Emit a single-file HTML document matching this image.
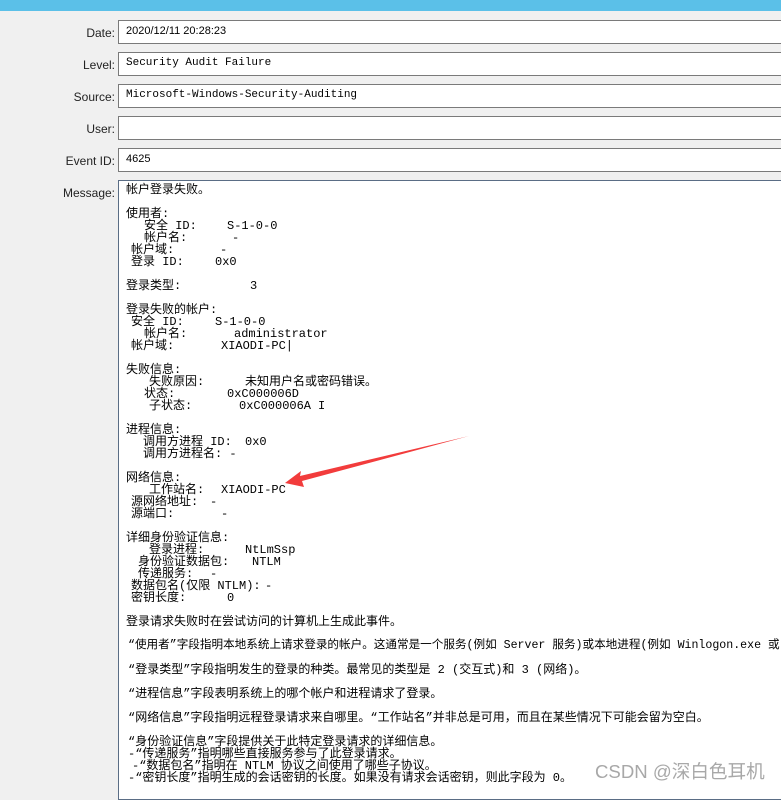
<!DOCTYPE html>
<html><head><meta charset="utf-8"><style>
*{margin:0;padding:0;box-sizing:border-box}
body{width:781px;height:789px;overflow:hidden;background:#f0f0f0;position:relative;font-family:"Liberation Mono","Noto Sans CJK SC",monospace;font-size:12px;color:#000}
.bar{position:absolute;left:0;top:0;width:781px;height:11px;background:#5bc0e8}
.lab{position:absolute;right:666px;font-family:"Liberation Sans",sans-serif;font-size:12px;color:#222;text-align:right;white-space:nowrap}
.f{position:absolute;left:118px;width:680px;height:24px;background:#fff;border:1px solid #7a7a7a}
.f span{position:absolute;left:7px;top:4px;font-size:11px;white-space:nowrap}
.msg{position:absolute;left:118px;top:180px;width:680px;height:620px;background:#fff;border:1px solid #5a6d85}
.l{position:absolute;white-space:nowrap;font-size:12px;line-height:14px;top:1px}
.wm{position:absolute;left:595px;top:757px;font-family:"Liberation Sans","Noto Sans CJK SC",sans-serif;font-size:18.6px;color:#a8a8a8}
</style></head><body>
<div class="bar"></div>
<div class="lab" style="top:26px">Date:</div>
<div class="lab" style="top:58px">Level:</div>
<div class="lab" style="top:90px">Source:</div>
<div class="lab" style="top:122px">User:</div>
<div class="lab" style="top:154px">Event ID:</div>
<div class="lab" style="top:186px">Message:</div>
<div class="f" style="top:20px"><span style="font-family:'Liberation Sans',sans-serif">2020/12/11 20:28:23</span></div>
<div class="f" style="top:52px"><span>Security Audit Failure</span></div>
<div class="f" style="top:84px"><span>Microsoft-Windows-Security-Auditing</span></div>
<div class="f" style="top:116px"></div>
<div class="f" style="top:148px"><span style="font-family:'Liberation Sans',sans-serif">4625</span></div>
<div class="msg"></div>
<div style="position:absolute;left:0;top:1px;width:781px;height:789px">
<div class="l" style="left:126px;top:182px">帐户登录失败。</div>
<div class="l" style="left:126px;top:206px">使用者:</div>
<div class="l" style="left:144px;top:218px">安全 ID:</div><div class="l" style="left:227px;top:218px">S-1-0-0</div>
<div class="l" style="left:144px;top:230px">帐户名:</div><div class="l" style="left:232px;top:230px">-</div>
<div class="l" style="left:131px;top:242px">帐户域:</div><div class="l" style="left:220px;top:242px">-</div>
<div class="l" style="left:131px;top:254px">登录 ID:</div><div class="l" style="left:215px;top:254px">0x0</div>
<div class="l" style="left:126px;top:278px">登录类型:</div><div class="l" style="left:250px;top:278px">3</div>
<div class="l" style="left:126px;top:302px">登录失败的帐户:</div>
<div class="l" style="left:131px;top:314px">安全 ID:</div><div class="l" style="left:215px;top:314px">S-1-0-0</div>
<div class="l" style="left:144px;top:326px">帐户名:</div><div class="l" style="left:234px;top:326px">administrator</div>
<div class="l" style="left:131px;top:338px">帐户域:</div><div class="l" style="left:221px;top:338px">XIAODI-PC|</div>
<div class="l" style="left:126px;top:362px">失败信息:</div>
<div class="l" style="left:149px;top:374px">失败原因:</div><div class="l" style="left:245px;top:374px">未知用户名或密码错误。</div>
<div class="l" style="left:144px;top:386px">状态:</div><div class="l" style="left:227px;top:386px">0xC000006D</div>
<div class="l" style="left:149px;top:398px">子状态:</div><div class="l" style="left:239px;top:398px">0xC000006A</div>
<div class="l" style="left:318px;top:398px">I</div>
<div class="l" style="left:126px;top:422px">进程信息:</div>
<div class="l" style="left:143px;top:434px">调用方进程 ID:</div><div class="l" style="left:245px;top:434px">0x0</div>
<div class="l" style="left:143px;top:446px">调用方进程名: -</div>
<div class="l" style="left:126px;top:470px">网络信息:</div>
<div class="l" style="left:149px;top:482px">工作站名:</div><div class="l" style="left:221px;top:482px">XIAODI-PC</div>
<div class="l" style="left:131px;top:494px">源网络地址:</div><div class="l" style="left:210px;top:494px">-</div>
<div class="l" style="left:131px;top:506px">源端口:</div><div class="l" style="left:221px;top:506px">-</div>
<div class="l" style="left:126px;top:530px">详细身份验证信息:</div>
<div class="l" style="left:149px;top:542px">登录进程:</div><div class="l" style="left:245px;top:542px">NtLmSsp</div>
<div class="l" style="left:138px;top:554px">身份验证数据包:</div><div class="l" style="left:252px;top:554px">NTLM</div>
<div class="l" style="left:138px;top:566px">传递服务:</div><div class="l" style="left:210px;top:566px">-</div>
<div class="l" style="left:131px;top:578px">数据包名(仅限 NTLM):</div><div class="l" style="left:265px;top:578px">-</div>
<div class="l" style="left:131px;top:590px">密钥长度:</div><div class="l" style="left:227px;top:590px">0</div>
<div class="l" style="left:126px;top:614px">登录请求失败时在尝试访问的计算机上生成此事件。</div>
<div class="l" style="left:128px;top:638px;font-size:11.6px">“使用者”字段指明本地系统上请求登录的帐户。这通常是一个服务(例如 Server 服务)或本地进程(例如 Winlogon.exe 或</div>
<div class="l" style="left:128px;top:662px">“登录类型”字段指明发生的登录的种类。最常见的类型是 2 (交互式)和 3 (网络)。</div>
<div class="l" style="left:128px;top:686px">“进程信息”字段表明系统上的哪个帐户和进程请求了登录。</div>
<div class="l" style="left:128px;top:710px">“网络信息”字段指明远程登录请求来自哪里。“工作站名”并非总是可用，而且在某些情况下可能会留为空白。</div>
<div class="l" style="left:128px;top:734px">“身份验证信息”字段提供关于此特定登录请求的详细信息。</div>
<div class="l" style="left:128px;top:746px">-“传递服务”指明哪些直接服务参与了此登录请求。</div>
<div class="l" style="left:132px;top:758px">-“数据包名”指明在 NTLM 协议之间使用了哪些子协议。</div>
<div class="l" style="left:128px;top:770px">-“密钥长度”指明生成的会话密钥的长度。如果没有请求会话密钥，则此字段为 0。</div>
</div>
<svg style="position:absolute;left:0;top:0" width="781" height="789"><polygon points="285,483 301,471 300,476 469,436 302,481 304,487" fill="#f23c3c"/></svg>
<div class="wm">CSDN @深白色耳机</div>
</body></html>
